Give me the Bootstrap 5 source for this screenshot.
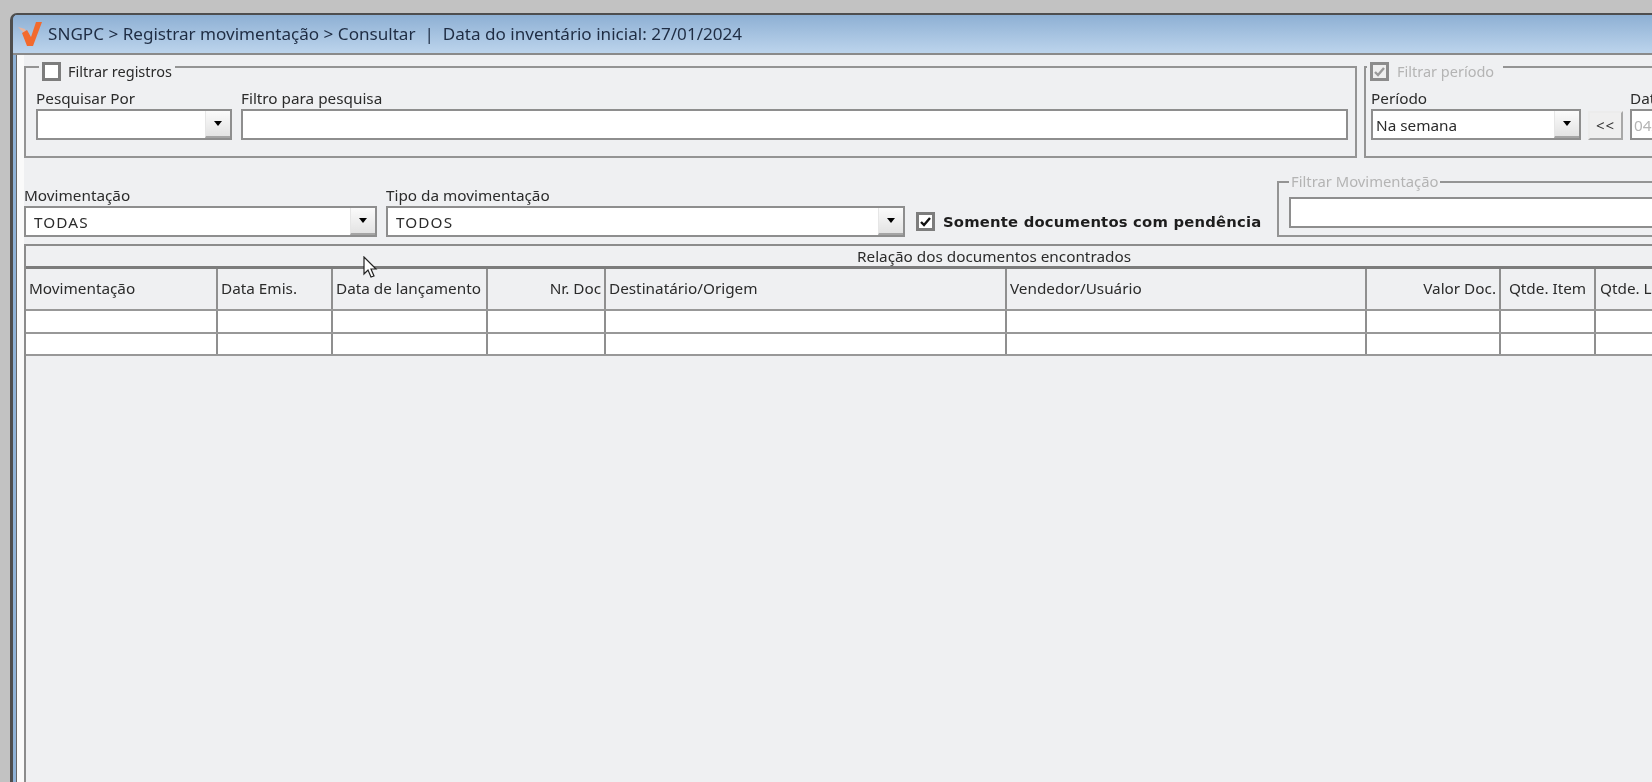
<!DOCTYPE html>
<html lang="pt-BR">
<head>
<meta charset="utf-8">
<title>SNGPC</title>
<link rel="stylesheet" href="https://cdn.jsdelivr.net/npm/bootstrap@5.3.0/dist/css/bootstrap.min.css">
<style>
html,body{height:100%;overflow:hidden}
body{background:#c2c2c2;font-family:"Noto Sans","Liberation Sans",Arial,sans-serif;font-size:15.3px;color:#2b2b2b;line-height:18px}
.erp-win{width:1990px;height:800px;margin:13px 0 0 10px;border:solid #4e4e4e;border-width:2px 0 0 3px;border-top-left-radius:7px;background:#8fb2d6;padding-left:3px;overflow:hidden;filter:blur(.35px)}
.erp-title{height:40px;margin-left:-3px;padding-left:5px;background:linear-gradient(#8eb0d4,#bcd4ec);font-size:17.1px;color:#1f2d44;border-bottom:2px solid #8a8a8a;white-space:pre}
.erp-title svg{margin-right:4px}
.erp-client{height:100%;background:#eff0f2;border-left:1px solid #666;box-shadow:inset 7px 0 0 #fafafa;padding:2px 0 0 7px}
.erp-group{margin:0;padding:0 0 16px;border:2px solid #949494;min-width:0;flex:none}
.erp-group legend{float:none;width:auto;height:20px;margin:0 0 0 13px;padding:5px 3px 0 3px;font-size:14.5px;line-height:17px;display:flex;gap:7px;align-items:flex-start}
.erp-group legend span:last-child{margin-top:1px}
.erp-g1{width:1333px}
.erp-g2{width:400px;margin-left:7px}
.erp-g2 legend{margin-left:1px;padding-right:9px;gap:8px}
.erp-g3{width:500px;margin-left:16px;padding:0 10px 7px 10px}
.erp-g3 legend{height:18px;margin-left:0;padding:0 2px;font-size:14.8px}
.erp-g3 .erp-ctl{margin-top:6px}
.erp-muted{color:#b4b4b4}
.erp-box{display:flex;align-items:center;justify-content:center;width:19px;height:19px;border:3px solid #7d7d7d;background:#fff;flex:none}
.erp-box.off{background:#efefef;border-color:#8c8c8c}
.erp-fields{padding:12px 7px 0 10px;gap:9px}
.erp-field label{display:block;height:18px;margin:0 0 2px;white-space:nowrap}
.erp-ctl{height:31px;background:#fff;border:2px solid #8e8e8e;display:flex;align-items:center;padding-left:7px;letter-spacing:1.1px;white-space:nowrap;overflow:hidden}
.erp-combo{padding-right:0;justify-content:space-between}
.erp-arrow{width:25px;height:100%;flex:none;display:flex;align-items:center;justify-content:center;background:linear-gradient(#fbfbfb,#e3e3e3);border-bottom:2px solid #a5a5a5;border-left:1px solid #e6e6e6}
.erp-arrow i{display:block;width:0;height:0;border:solid transparent;border-width:5px 4px 0;border-top-color:#000}
.erp-back{width:35px;height:29px;margin:22px -2px 0 -2px;padding:0;border-radius:0;background:#efefef;border:2px solid #a8a8a8;border-top-color:#ececec;border-left-color:#ececec;font-size:15px;line-height:1;color:#333;letter-spacing:1px}
.erp-row2{margin-top:15px;align-items:flex-end}
.erp-strong{font-family:"DejaVu Sans",sans-serif;font-weight:700;font-size:14.8px;letter-spacing:.2px;white-space:nowrap;color:#1d1d1d}
.erp-panel{width:1938px;height:600px;margin-top:7px;border:solid #8c8c8c;border-width:2px 0 0 2px}
.erp-caption{height:20px;text-align:center;line-height:21px;border-bottom:3px solid #7c7c7c;box-sizing:content-box}
.erp-panel .table{width:1798px;table-layout:fixed;margin:0;border-collapse:collapse;--bs-table-bg:transparent;--bs-table-color:#2b2b2b}
.erp-panel .table th,.erp-panel .table td{border:0;border-right:2px solid #8f8f8f;border-bottom:2px solid #989898;padding:0 3px;font-weight:400;white-space:nowrap}
.erp-panel .table th{height:41px;padding-bottom:3px;vertical-align:middle;background:#eff0f2;overflow:hidden}
.erp-panel .table td{height:22px;background:#fff}
.erp-panel .table tbody tr:first-child td{height:23px}
.erp-pointer{position:absolute;left:363px;top:256px;width:16px;height:24px}
</style>
</head>
<body>
<div class="erp-win">
  <div class="erp-title d-flex align-items-center">
    <svg width="26" height="26" viewBox="0 0 26 26"><path d="M0 6 7 8 8 14Z" fill="#e8b5a0"/><path d="M4 12 9 9 13 16 18 1 24 1 15 25 9 25Z" fill="#f26a2e"/></svg><span>SNGPC &gt; Registrar movimentação &gt; Consultar  |  Data do inventário inicial: 27/01/2024</span>
  </div>
  <div class="erp-client">
    <div class="d-flex">
      <fieldset class="erp-group erp-g1">
        <legend><span class="erp-box"></span><span>Filtrar registros</span></legend>
        <div class="erp-fields d-flex">
          <div class="erp-field"><label>Pesquisar Por</label>
            <div class="erp-ctl erp-combo" style="width:196px"><span></span><span class="erp-arrow"><i></i></span></div></div>
          <div class="erp-field flex-grow-1"><label>Filtro para pesquisa</label><div class="erp-ctl"></div></div>
        </div>
      </fieldset>
      <fieldset class="erp-group erp-g2">
        <legend class="erp-muted"><span class="erp-box off"><svg width="13" height="12" viewBox="0 0 13 12"><path d="M2 6 5 9 11 2" fill="none" stroke="#9a9a9a" stroke-width="2.4"/></svg></span><span>Filtrar período</span></legend>
        <div class="erp-fields d-flex" style="padding-left:5px">
          <div class="erp-field"><label>Período</label>
            <div class="erp-ctl erp-combo" style="width:210px;letter-spacing:0;padding-left:3px"><span>Na semana</span><span class="erp-arrow"><i></i></span></div></div>
          <button type="button" class="btn erp-back">&lt;&lt;</button>
          <div class="erp-field"><label>Data</label><div class="erp-ctl erp-muted" style="width:100px;padding-left:2px;letter-spacing:0">04/01/2024</div></div>
        </div>
      </fieldset>
    </div>
    <div class="d-flex erp-row2">
      <div class="erp-field" style="margin-right:9px"><label>Movimentação</label>
        <div class="erp-ctl erp-combo ps-2" style="width:353px"><span>TODAS</span><span class="erp-arrow"><i></i></span></div></div>
      <div class="erp-field"><label>Tipo da movimentação</label>
        <div class="erp-ctl erp-combo ps-2" style="width:519px"><span>TODOS</span><span class="erp-arrow"><i></i></span></div></div>
      <div class="d-flex align-items-center erp-strong" style="height:31px;width:345px;margin-left:11px;gap:8px">
        <span class="erp-box"><svg width="13" height="12" viewBox="0 0 13 12"><path d="M2 6 5 9 11 2" fill="none" stroke="#111" stroke-width="2.4"/></svg></span><span>Somente documentos com pendência</span>
      </div>
      <fieldset class="erp-group erp-g3">
        <legend class="erp-muted">Filtrar Movimentação</legend>
        <div class="erp-ctl"></div>
      </fieldset>
    </div>
    <div class="erp-panel">
      <div class="erp-caption">Relação dos documentos encontrados</div>
      <table class="table">
        <colgroup><col style="width:191px"><col style="width:115px"><col style="width:155px"><col style="width:118px"><col style="width:401px"><col style="width:360px"><col style="width:134px"><col style="width:95px"><col style="width:229px"></colgroup>
        <thead><tr>
          <th>Movimentação</th><th>Data Emis.</th><th>Data de lançamento</th><th class="text-end">Nr. Doc</th><th>Destinatário/Origem</th><th>Vendedor/Usuário</th><th class="text-end">Valor Doc.</th><th class="text-center">Qtde. Item</th><th class="ps-1">Qtde. Lote</th>
        </tr></thead>
        <tbody>
          <tr><td></td><td></td><td></td><td></td><td></td><td></td><td></td><td></td><td></td></tr>
          <tr><td></td><td></td><td></td><td></td><td></td><td></td><td></td><td></td><td></td></tr>
        </tbody>
      </table>
    </div>
  </div>
</div>
<svg class="erp-pointer" viewBox="0 0 16 24"><path d="M1 1V18L5 14 8 21 11 20 8 13H13Z" fill="#fff" stroke="#222" stroke-width="1.2"/></svg>
<script src="https://cdn.jsdelivr.net/npm/bootstrap@5.3.0/dist/js/bootstrap.bundle.min.js"></script>
</body>
</html>
